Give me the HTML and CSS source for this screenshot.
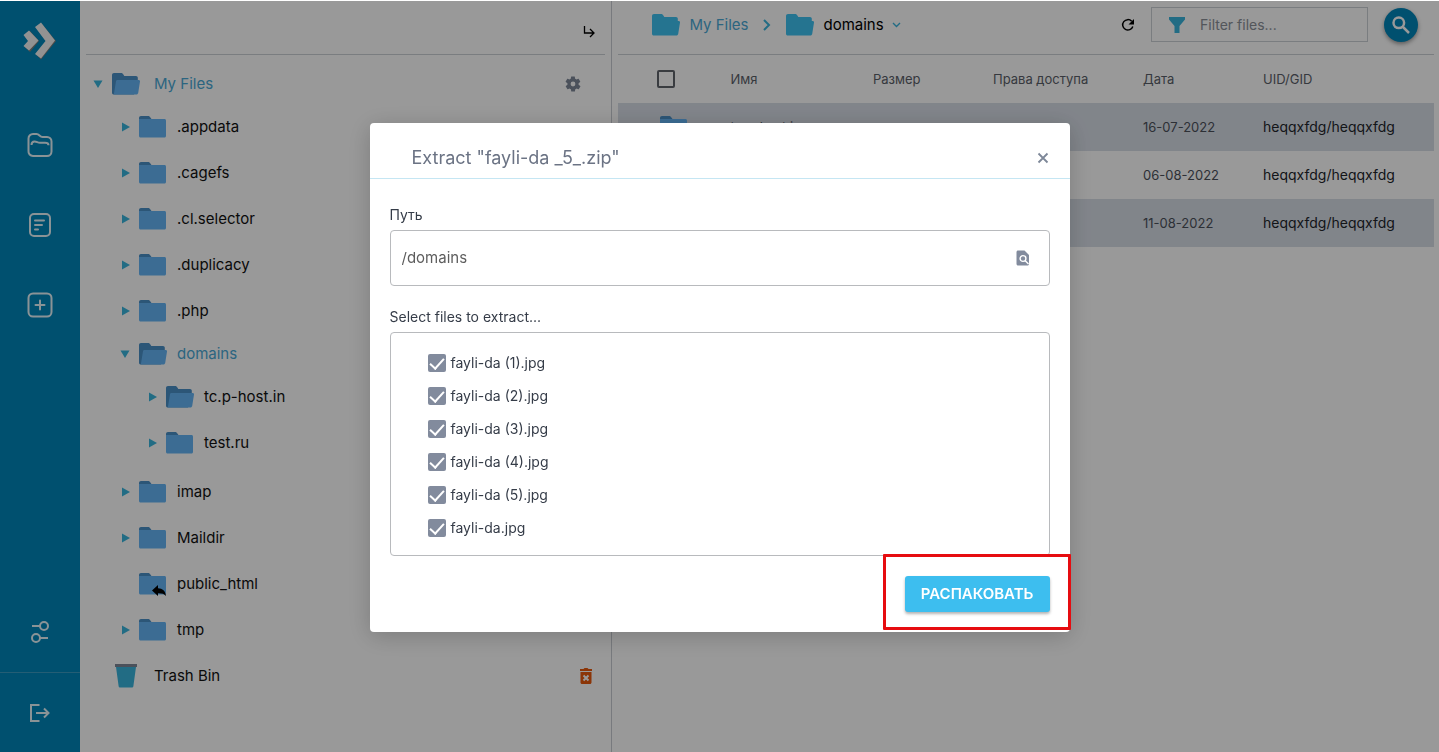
FILE: index.html
```html
<!DOCTYPE html>
<html lang="ru">
<head>
<meta charset="utf-8">
<meta name="viewport" content="width=device-width, initial-scale=1">
<title>File Manager</title>
<link rel="stylesheet" href="styles.css">
</head>
<body>
<svg class="sprite" aria-hidden="true">
  <symbol id="folder" viewBox="0 0 28 24"><path fill="#4a8fc6" d="M2 1h7c1 0 1.600.5 2.200 1.300L12.500 4v5H0V3c0-1.200.8-2 2-2z"/><path fill="#64b5f6" d="M0 4h25.500c.8 0 1.500.7 1.500 1.500V21c0 .8-.7 1.500-1.500 1.500h-24C.7 22.500 0 21.800 0 21z"/></symbol>
  <symbol id="folder-open" viewBox="0 0 28 24"><path fill="#4a8fc6" d="M2 1h7c1 0 1.600.5 2.200 1.300L12.300 4H24c1 0 1.800.8 1.800 1.800V9L22 22.500H1.800C.8 22.500 0 21.700 0 20.700V3c0-1.200.8-2 2-2z"/><path fill="#64b5f6" d="M5.500 8h21.300c.8 0 1.400.7 1.200 1.500L26.200 21c-.2.900-.9 1.500-1.800 1.500H1.800L4 9.200C4.100 8.500 4.800 8 5.500 8z"/></symbol>
  <symbol id="folder-solid" viewBox="0 0 28 24"><path fill="#3ec1f1" d="M2 1h7c1 0 1.600.5 2.200 1.300L12.300 4H24c1 0 1.800.8 1.800 1.800V8h1c.8 0 1.400.7 1.200 1.500L26.200 21c-.2.900-.9 1.500-1.800 1.500H1.800C.8 22.500 0 21.700 0 20.700V3c0-1.200.8-2 2-2z"/></symbol>
  <symbol id="arrow-right" viewBox="0 0 10 10"><path fill="#3ab5dd" d="M2 .5 10 5 2 9.500z"/></symbol>
  <symbol id="arrow-down" viewBox="0 0 10 10"><path fill="#3ab5dd" d="M.5 1.500h9L5 9z"/></symbol>
</svg>

<div class="app">
  <nav class="rail" aria-label="Main">
    <a class="rail-item rail-logo" href="#" aria-label="Home">
      <svg width="34" height="40" viewBox="0 0 34 40"><path fill="#817d78" d="m14 7 5-4 14 17-15 18.500-5-5 11-13.500z"/><path fill="#817d78" d="m2 14 5-4 9 10-9 11-5-5 5-6z"/><path fill="#f4f4f4" d="m12 6 6-4.500L32 19.500 18 37.500l-6-4.500L22.500 20z"/><path fill="#f4f4f4" d="m.5 14 5.500-4.500 9.500 10L6 29.500.5 25 5 20z"/></svg>
    </a>
    <a class="rail-item" href="#" aria-label="Files">
      <svg width="28" height="26" viewBox="0 0 28 26" fill="none" stroke="#e6f5fb" stroke-width="2"><path d="M2.500 19V6.500a4.500 4.500 0 0 1 4.500-4.500h3.500c3 0 3 3 6 3H21a4.500 4.500 0 0 1 4.500 4.500v10a4.500 4.500 0 0 1-4.500 4.500H7A4.500 4.500 0 0 1 2.500 19z"/><path d="M5.500 13c0-2.500 1.200-3.500 3-3.500 2.500 0 3 1.300 5.500 1.300h5c2 0 3.500.4 3.500 2.400"/></svg>
    </a>
    <a class="rail-item" href="#" aria-label="Document">
      <svg width="24" height="26" viewBox="0 0 24 26" fill="none" stroke="#e6f5fb" stroke-width="2"><rect x="2" y="2" width="20" height="22" rx="4"/><path stroke-linecap="round" d="M7 8.500h9M7 13h7M7 17.500h3"/></svg>
    </a>
    <a class="rail-item" href="#" aria-label="Add">
      <svg width="28" height="28" viewBox="0 0 28 28" fill="none" stroke="#e6f5fb" stroke-width="2"><rect x="2.500" y="2.500" width="23" height="23" rx="4.500"/><path stroke-linecap="round" d="M14 9.500v9M9.500 14h9"/></svg>
    </a>
    <span class="rail-space"></span>
    <a class="rail-item" href="#" aria-label="Settings">
      <svg width="20" height="24" viewBox="0 0 20 24" fill="none" stroke="#e6f5fb" stroke-width="2"><circle cx="14" cy="6" r="4"/><circle cx="6" cy="18" r="4"/><path d="M2 6h8M10 18h8"/></svg>
    </a>
    <a class="rail-item rail-exit" href="#" aria-label="Log out">
      <svg width="22" height="20" viewBox="0 0 22 20" fill="none" stroke="#e6f5fb" stroke-width="2"><path d="M10.500 2H2v16h8.500M7 10h12.500M15 5.500l4.500 4.500-4.500 4.500"/></svg>
    </a>
  </nav>

  <aside class="tree-panel">
    <div class="tree-head">
      <button class="icon-btn" type="button" aria-label="Collapse"><svg width="14" height="14" viewBox="0 0 14 14" fill="none" stroke="#000" stroke-width="1.300"><path d="M2.500 1v7h9M8 4l4 4-4 4"/></svg></button>
    </div>
    <ul class="tree">
      <li>
        <div class="node root open"><svg class="caret"><use href="#arrow-down"/></svg><svg class="dir"><use href="#folder-open"/></svg><span class="name">My Files</span>
          <button class="icon-btn gear" type="button" aria-label="Folder settings"><svg width="18" height="18" viewBox="0 0 24 24" fill="#7d8798"><path d="M19.400 13c.04-.3.100-.64.100-1s-.03-.7-.07-1l2.100-1.600c.2-.2.300-.4.100-.7l-2-3.400c-.1-.2-.4-.3-.6-.2l-2.500 1c-.5-.4-1.100-.7-1.700-1l-.4-2.600c0-.2-.2-.4-.5-.4h-4c-.2 0-.4.200-.5.400l-.4 2.600c-.6.300-1.200.6-1.700 1l-2.500-1c-.2-.1-.5 0-.6.200l-2 3.400c-.1.300 0 .5.100.7L4.600 11a8 8 0 0 0 0 2l-2.100 1.600c-.2.200-.3.400-.1.700l2 3.400c.1.200.4.300.6.200l2.500-1c.5.400 1.100.7 1.700 1l.4 2.600c.1.200.3.400.5.400h4c.3 0 .5-.2.500-.4l.4-2.600c.6-.3 1.200-.6 1.700-1l2.500 1c.2.100.5 0 .6-.2l2-3.400c.2-.3.100-.5-.1-.7zM12 15.200a3.200 3.200 0 1 1 0-6.400 3.200 3.200 0 0 1 0 6.400z"/></svg></button>
        </div>
        <ul>
          <li><div class="node"><svg class="caret"><use href="#arrow-right"/></svg><svg class="dir"><use href="#folder"/></svg><span class="name">.appdata</span></div></li>
          <li><div class="node"><svg class="caret"><use href="#arrow-right"/></svg><svg class="dir"><use href="#folder"/></svg><span class="name">.cagefs</span></div></li>
          <li><div class="node"><svg class="caret"><use href="#arrow-right"/></svg><svg class="dir"><use href="#folder"/></svg><span class="name">.cl.selector</span></div></li>
          <li><div class="node"><svg class="caret"><use href="#arrow-right"/></svg><svg class="dir"><use href="#folder"/></svg><span class="name">.duplicacy</span></div></li>
          <li><div class="node"><svg class="caret"><use href="#arrow-right"/></svg><svg class="dir"><use href="#folder"/></svg><span class="name">.php</span></div></li>
          <li>
            <div class="node open"><svg class="caret"><use href="#arrow-down"/></svg><svg class="dir"><use href="#folder-open"/></svg><span class="name">domains</span></div>
            <ul class="sub">
              <li><div class="node"><svg class="caret"><use href="#arrow-right"/></svg><svg class="dir"><use href="#folder-open"/></svg><span class="name">tc.p-host.in</span></div></li>
              <li><div class="node"><svg class="caret"><use href="#arrow-right"/></svg><svg class="dir"><use href="#folder"/></svg><span class="name">test.ru</span></div></li>
            </ul>
          </li>
          <li><div class="node"><svg class="caret"><use href="#arrow-right"/></svg><svg class="dir"><use href="#folder"/></svg><span class="name">imap</span></div></li>
          <li><div class="node"><svg class="caret"><use href="#arrow-right"/></svg><svg class="dir"><use href="#folder"/></svg><span class="name">Maildir</span></div></li>
          <li><div class="node"><span class="caret"></span><svg class="dir" viewBox="0 0 28 24"><use href="#folder" width="28" height="24"/><path d="M13 18.500 19 13v3.300c4.500.2 7.500 2.700 8 7.700-1.800-2.300-4.300-2.800-8-2.700V24z"/></svg><span class="name">public_html</span></div></li>
          <li><div class="node"><svg class="caret"><use href="#arrow-right"/></svg><svg class="dir"><use href="#folder"/></svg><span class="name">tmp</span></div></li>
        </ul>
      </li>
      <li>
        <div class="node root"><span class="caret"></span><svg class="dir trash" viewBox="0 0 28 24"><path fill="#7d8798" d="M3 0h22v3H3z"/><path fill="#3ab5dd" d="M4 3h20l-2.600 19c-.1 1-.8 1.500-1.700 1.500H8.300c-.9 0-1.600-.5-1.700-1.500z"/></svg><span class="name">Trash Bin</span>
          <button class="icon-btn" type="button" aria-label="Empty trash"><svg width="14" height="18" viewBox="0 0 14 18"><path fill="#e8590c" d="M1 2h3.500l1-1h3l1 1H13v2H1zM1.500 5h11v10.500c0 .8-.7 1.500-1.500 1.500H3c-.8 0-1.500-.7-1.500-1.500z"/><path d="m4.500 8.500 5 5m0-5-5 5" stroke="#fff" stroke-width="2"/></svg></button>
        </div>
      </li>
    </ul>
  </aside>

  <main class="content">
    <header class="toolbar">
      <a class="crumb" href="#"><svg class="dir"><use href="#folder-solid"/></svg>My Files</a>
      <svg class="crumb-sep" width="8" height="12" viewBox="0 0 8 12" fill="none" stroke="#3ab5dd" stroke-width="2"><path d="m1 1 5 5-5 5"/></svg>
      <a class="crumb current" href="#"><svg class="dir"><use href="#folder-solid"/></svg>domains</a>
      <svg class="crumb-more" width="9" height="6" viewBox="0 0 9 6" fill="none" stroke="#3ab5dd" stroke-width="1.400"><path d="m1 1 3.500 3.500L8 1"/></svg>
      <button class="icon-btn reload" type="button" aria-label="Reload"><svg width="14" height="14" viewBox="0 0 14 14"><path fill="none" stroke="#000" stroke-width="1.500" d="M11.800 8.500A5.200 5.200 0 1 1 10.700 3.300"/><path d="M13 1v5.500H7.500z"/></svg></button>
      <label class="filter">
        <svg width="18" height="18" viewBox="0 0 18 18" fill="#3ab5dd"><path d="M1 1h16v2.500L11.500 10v7h-5v-7L1 3.500z"/></svg>
        <input type="text" placeholder="Filter files..." aria-label="Filter files">
      </label>
      <button class="search" type="button" aria-label="Search"><svg width="20" height="20" viewBox="0 0 20 20" fill="none" stroke="#fff" stroke-width="2.500"><circle cx="7.800" cy="7.800" r="5.300"/><path d="m12 12 6 6"/></svg></button>
    </header>
    <table class="files">
      <thead>
        <tr><th class="c-check"><input class="tick-all" type="checkbox" aria-label="Select all"></th><th>Имя</th><th class="c-size">Размер</th><th class="c-perm">Права доступа</th><th class="c-date">Дата</th><th class="c-owner">UID/GID</th></tr>
      </thead>
      <tbody>
        <tr><td class="c-check"><svg class="dir"><use href="#folder"/></svg></td><td class="fine">tc.p-host.in</td><td></td><td class="fine">rwx--x--x</td><td class="fine">16-07-2022</td><td>heqqxfdg/heqqxfdg</td></tr>
        <tr><td class="c-check"><svg class="dir"><use href="#folder"/></svg></td><td class="fine">test.ru</td><td></td><td class="fine">rwx--x--x</td><td class="fine">06-08-2022</td><td>heqqxfdg/heqqxfdg</td></tr>
        <tr><td class="c-check"><svg class="dir"><use href="#folder"/></svg></td><td class="fine">fayli-da _5_.zip</td><td></td><td class="fine">rw-r--r--</td><td class="fine">11-08-2022</td><td>heqqxfdg/heqqxfdg</td></tr>
      </tbody>
    </table>
  </main>
</div>

<div class="backdrop">
  <form class="dialog" role="dialog" aria-labelledby="dialog-title">
    <header class="dialog-head">
      <h1 id="dialog-title">Extract "fayli-da _5_.zip"</h1>
      <button class="icon-btn" type="button" aria-label="Close"><svg width="12" height="12" viewBox="0 0 12 12" stroke="#7d8798" stroke-width="1.800"><path d="m1.500 1.500 9 9m0-9-9 9"/></svg></button>
    </header>
    <div class="dialog-body">
      <div class="field">
        <label for="path">Путь</label>
        <div class="path-box">
          <input id="path" type="text" value="/domains">
          <button class="icon-btn" type="button" aria-label="Browse"><svg width="14" height="16" viewBox="0 0 14 16"><path fill="#828b9d" d="M2 .5h6.500L13 5v9c0 .8-.7 1.500-1.500 1.500H2C1.200 15.500.500 14.800.500 14V2C.5 1.200 1.200.5 2 .5z"/><circle cx="7" cy="8.500" r="2.900" fill="none" stroke="#fff" stroke-width="1.400"/><path d="m9 10.500 3.500 3.500" stroke="#fff" stroke-width="1.400"/></svg></button>
        </div>
      </div>
      <fieldset class="field">
        <legend>Select files to extract...</legend>
        <div class="pick-list">
          <label><input type="checkbox" checked>fayli-da (1).jpg</label>
          <label><input type="checkbox" checked>fayli-da (2).jpg</label>
          <label><input type="checkbox" checked>fayli-da (3).jpg</label>
          <label><input type="checkbox" checked>fayli-da (4).jpg</label>
          <label><input type="checkbox" checked>fayli-da (5).jpg</label>
          <label><input type="checkbox" checked>fayli-da.jpg</label>
        </div>
      </fieldset>
    </div>
    <footer class="dialog-foot">
      <span class="submit-wrap"><button class="submit" type="submit">РАСПАКОВАТЬ</button></span>
    </footer>
  </form>
</div>
</body>
</html>
```

FILE: styles.css
```css
* { box-sizing: border-box; }

body {
  margin: 0;
  padding-top: 1px;
  background: #fff;
  color: #111;
  font: 15px/20px Inter, "Noto Sans", sans-serif;
}

ul { margin: 0; padding: 0; list-style: none; }
a { color: inherit; text-decoration: none; }
svg { display: block; flex: none; }
input, button { font: inherit; color: inherit; }
.sprite { position: absolute; width: 0; height: 0; }

.icon-btn {
  display: grid;
  place-items: center;
  flex: none;
  padding: 0;
  border: 0;
  background: none;
}

.dir { width: 28px; height: 24px; }

.app {
  display: flex;
  min-height: calc(100vh - 1px);
}

/* Navigation rail */
.rail {
  display: flex;
  flex-direction: column;
  flex: 0 0 80px;
  background: #0085b9;
}
.rail-item {
  display: grid;
  place-items: center;
  height: 80px;
}
.rail-logo { margin-bottom: 24px; }
.rail-space { flex: 1; }
.rail-exit { border-top: 1px solid #3d9dc4; }

/* Folder tree */
.tree-panel {
  flex: 0 0 37%;
  padding: 0 6px;
  border-right: 1px solid #c8ccd2;
}
.tree-head {
  display: flex;
  justify-content: flex-end;
  height: 54px;
  padding: 8px 9px 0 0;
  border-bottom: 1px solid #ccd0d6;
}
.tree { padding-top: 9px; }
.tree ul { padding-left: 27px; }
.tree .sub { padding-bottom: 3px; }
.node {
  display: flex;
  align-items: center;
  height: 46px;
}
.node.open { height: 40px; }
.node.open .name { color: #4aa9d6; }
.caret { flex: none; width: 10px; height: 10px; margin: 0 9px 0 7px; }
.name { margin-left: 10px; }
.root .name { flex: 1; margin-left: 14px; }
.root .icon-btn { margin-right: 12px; }
.root .gear { margin-right: 23px; }

/* File listing */
.content {
  flex: 1;
  min-width: 0;
  padding: 0 5px 0 6px;
}
.toolbar {
  display: flex;
  align-items: center;
  height: 54px;
  padding: 0 16px 6px 34px;
  border-bottom: 1px solid #ccd0d6;
}
.crumb {
  display: flex;
  align-items: center;
  gap: 9px;
  color: #4aa9d6;
}
.crumb.current { color: #000; }
.crumb-sep { margin: 0 15px; }
.crumb-more { margin-left: 8px; }
.reload { margin: 0 16px 0 auto; }
.filter {
  display: flex;
  align-items: center;
  gap: 14px;
  width: 217px;
  height: 35px;
  padding: 0 16px;
  border: 1px solid #ccd0d6;
}
.filter input {
  flex: 1;
  min-width: 0;
  padding: 0;
  border: 0;
  background: none;
  font-size: 14px;
}
.filter input::placeholder { color: #8a8f98; }
.search {
  display: grid;
  place-items: center;
  width: 34px;
  height: 34px;
  margin-left: 16px;
  padding: 0;
  border: 0;
  border-radius: 50%;
  background: #0085b9;
  box-shadow: 0 2px 4px rgba(0, 0, 0, .4);
}

.files {
  width: 100%;
  table-layout: fixed;
  border-collapse: collapse;
  font-size: 14px;
}
.files tr { height: 48px; }
.files th, .files td { padding: 0 0 0 16px; text-align: left; white-space: nowrap; }
.files th { color: #5b6069; font-size: 13px; font-weight: 400; }
.files td { color: #22252b; }
.files td.fine { color: #4c515b; font-size: 13px; }
.files tbody tr:nth-child(odd) { background: #d8dee7; }
.files .c-check { width: 96px; padding: 0; }
.files td.c-check { padding-left: 15px; }
.c-check .dir, .c-check input { margin: 0 auto; }
.c-size, .c-date { width: 120px; }
.c-perm { width: 150px; }
.c-owner { width: 187px; }
.tick-all {
  display: block;
  appearance: none;
  width: 18px;
  height: 18px;
  border: 2px solid #60646c;
  border-radius: 2px;
}

/* Extract dialog */
.backdrop {
  position: fixed;
  inset: 1px 0 0;
  display: grid;
  place-items: center;
  padding: 2px 16px 0;
  background: rgba(0, 0, 0, .4);
}
.dialog {
  width: 100%;
  max-width: 700px;
  border-radius: 4px;
  background: #fff;
  box-shadow: 0 4px 24px rgba(0, 0, 0, .2);
}
.dialog-head {
  display: flex;
  align-items: center;
  justify-content: space-between;
  height: 56px;
  padding: 14px 21px 0 42px;
  border-bottom: 1px solid #c5e6f3;
}
.dialog-head h1 {
  margin: 0;
  color: #6b7384;
  font-size: 18px;
  font-weight: 400;
}
.dialog-body {
  display: grid;
  gap: 21px;
  padding: 26px 20px 20px;
  color: #353c48;
  font-size: 14px;
}
.field { min-width: 0; margin: 0; padding: 0; border: 0; }
.field > label, .field > legend {
  display: block;
  margin-bottom: 5px;
  padding: 0;
}
.path-box, .pick-list {
  border: 1px solid #b8babd;
  border-radius: 4px;
}
.path-box {
  display: flex;
  align-items: center;
  height: 56px;
  padding: 0 19px 0 11px;
}
.path-box input {
  flex: 1;
  min-width: 0;
  padding: 0;
  border: 0;
  color: #5d5d5d;
  font-size: 15px;
}
.pick-list { padding: 13px 0 11px 37px; }
.pick-list label {
  display: flex;
  align-items: center;
  gap: 5px;
  height: 33px;
}
.pick-list input {
  display: grid;
  justify-items: center;
  appearance: none;
  width: 18px;
  height: 18px;
  margin: 0;
  border-radius: 2px;
  background: #828b9d;
}
.pick-list input::before {
  content: "";
  width: 6px;
  height: 12px;
  margin-top: 1px;
  border: solid #fff;
  border-width: 0 2px 2px 0;
  transform: rotate(42deg);
}
.dialog-foot {
  display: flex;
  justify-content: flex-end;
  padding: 0 20px 20px;
}
.submit-wrap { position: relative; }
.submit-wrap::after {
  content: "";
  position: absolute;
  inset: -22px -21px -18px -22px;
  border: 3px solid #e60c10;
  border-radius: 1px;
  pointer-events: none;
}
.submit {
  display: block;
  min-width: 144px;
  height: 36px;
  padding: 0 16px;
  border: 0;
  border-radius: 3px;
  background: #3dbeef;
  box-shadow: 0 2px 3px rgba(0, 0, 0, .3);
  color: #fff;
  font-size: 15px;
  font-weight: 600;
}
```
